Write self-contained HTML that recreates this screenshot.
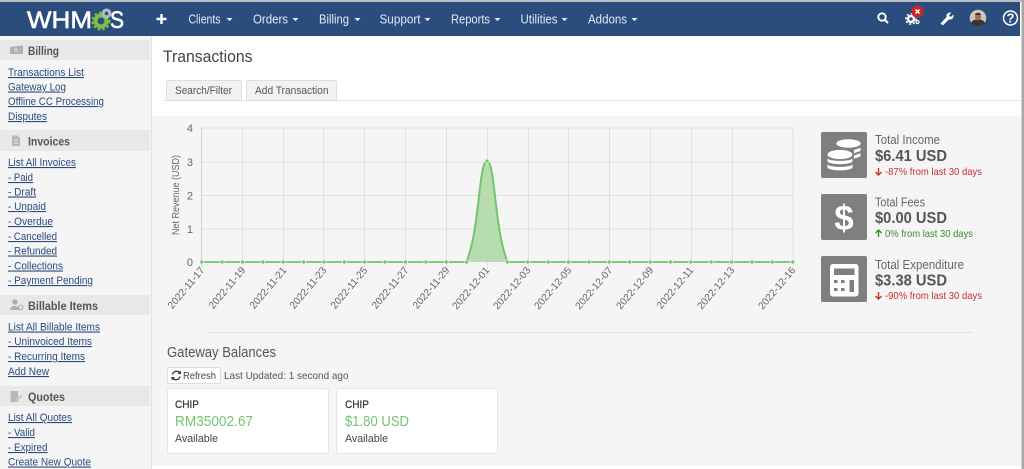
<!DOCTYPE html>
<html><head><meta charset="utf-8"><title>Transactions</title>
<style>
html,body{margin:0;padding:0;width:1024px;height:469px;overflow:hidden;background:#fff}
svg{display:block;font-family:"Liberation Sans",Arial,sans-serif;filter:blur(.35px)}
.nav{font-size:13px;fill:#e4eaf2}
.sh{font-size:12px;font-weight:bold;fill:#555}
.l{font-size:11px;fill:#2c4a80;text-decoration:underline}
.st{font-size:12.5px;fill:#666}
.sv{font-size:15.5px;font-weight:bold;fill:#555}
.r{font-size:10.5px;fill:#c9302c}
.g{font-size:10.5px;fill:#3c8d2f}
.t{font-size:11px;fill:#444}
.c{font-size:11px;fill:#333;stroke:#333;stroke-width:.25}
</style></head><body>
<svg width="1024" height="469" viewBox="0 0 1024 469" xmlns="http://www.w3.org/2000/svg">
<rect width="1024" height="469" fill="#fff"/>
<!-- sidebar -->
<rect x="0" y="36" width="151" height="433" fill="#f5f5f5"/>
<rect x="151" y="36" width="1" height="433" fill="#e2e2e2"/>
<!-- top bar -->
<rect x="0" y="0" width="1024" height="2" fill="#b9bcc0"/>
<rect x="0" y="2" width="1020" height="34" fill="#2a4d7e"/>
<rect x="1021.500" y="0" width="2.500" height="469" fill="#a8a8a8"/>
<!-- logo -->
<text x="27" y="28" font-size="24" fill="#fff" stroke="#fff" stroke-width=".6" textLength="65" lengthAdjust="spacingAndGlyphs">WHM</text>
<circle cx="101" cy="21" r="5.500" fill="none" stroke="#7cc142" stroke-width="4"/>
<circle cx="101" cy="21" r="8.500" fill="none" stroke="#7cc142" stroke-width="2" stroke-dasharray="2.500 2.200"/>
<circle cx="106.500" cy="13.500" r="5" fill="#aebcc6"/>
<circle cx="106.500" cy="13.500" r="1.800" fill="#2a4d7e"/>
<text x="110" y="28" font-size="24" fill="#fff" stroke="#fff" stroke-width=".6" textLength="14" lengthAdjust="spacingAndGlyphs">S</text>
<!-- nav -->
<path d="M161.500 14v10M156.500 19h10" stroke="#fff" stroke-width="2.400" fill="none"/>
<text class="nav" y="23.500" x="188.500" textLength="32" lengthAdjust="spacingAndGlyphs">Clients</text>
<text class="nav" y="23.500" x="253" textLength="35" lengthAdjust="spacingAndGlyphs">Orders</text>
<text class="nav" y="23.500" x="319" textLength="30" lengthAdjust="spacingAndGlyphs">Billing</text>
<text class="nav" y="23.500" x="379.500" textLength="41" lengthAdjust="spacingAndGlyphs">Support</text>
<text class="nav" y="23.500" x="451" textLength="39" lengthAdjust="spacingAndGlyphs">Reports</text>
<text class="nav" y="23.500" x="520.500" textLength="37" lengthAdjust="spacingAndGlyphs">Utilities</text>
<text class="nav" y="23.500" x="588" textLength="39" lengthAdjust="spacingAndGlyphs">Addons</text>
<g fill="#e4eaf2">
<path d="M226.500 18h6l-3 3.200z"/><path d="M292.500 18h6l-3 3.200z"/><path d="M354.500 18h6l-3 3.200z"/><path d="M424.500 18h6l-3 3.200z"/><path d="M494.500 18h6l-3 3.200z"/><path d="M561.500 18h6l-3 3.200z"/><path d="M631.500 18h6l-3 3.200z"/>
</g>
<!-- right icons -->
<circle cx="882" cy="17" r="3.700" fill="none" stroke="#fff" stroke-width="1.900"/>
<path d="M884.800 19.800l3.200 3.200" stroke="#fff" stroke-width="2.200"/>
<circle cx="911" cy="19" r="3" fill="none" stroke="#fff" stroke-width="2.600"/>
<circle cx="911" cy="19" r="5.200" fill="none" stroke="#fff" stroke-width="1.500" stroke-dasharray="2 2"/>
<circle cx="917.500" cy="22" r="1.500" fill="none" stroke="#fff" stroke-width="1.200"/>
<circle cx="917.500" cy="11.500" r="6.200" fill="#c42727"/>
<path d="M915.500 9.500l4 4M919.500 9.500l-4 4" stroke="#fff" stroke-width="1.500"/>
<path d="M941 23.500l6-6.500c-1-2.300.8-4.500 3.800-4.200l-2 2.100.6 1.700 1.800.5 2-2c.3 3-2 4.800-4.300 3.900l-6 6z" fill="#fff" stroke="#fff" stroke-width=".6"/>
<circle cx="978" cy="18" r="8.300" fill="#cfc5b8"/>
<path d="M971 23c1.500-3 3.500-3.500 7-3.500s5.500.5 7 3.500c-2 2.300-4.500 3.300-7 3.300s-5-1-7-3.300z" fill="#3a332e"/>
<ellipse cx="978" cy="16.500" rx="3" ry="4" fill="#8f7562"/>
<path d="M975 15c0-2.600 6-2.600 6 0z" fill="#3a332e"/>
<circle cx="1010.500" cy="18" r="7" fill="none" stroke="#fff" stroke-width="1.500"/>
<text x="1010.500" y="22.500" font-size="13" font-weight="bold" fill="#fff" text-anchor="middle">?</text>
<!-- sidebar sections -->
<rect x="0" y="40" width="150" height="20" fill="#e8e8e8"/>
<rect x="0" y="130" width="150" height="21" fill="#e8e8e8"/>
<rect x="0" y="295" width="150" height="20" fill="#e8e8e8"/>
<rect x="0" y="386" width="150" height="20" fill="#e8e8e8"/>
<path d="M10 47l12-1.500h1v8.500h-13z" fill="#b0b0b0"/><circle cx="16" cy="50" r="2.200" fill="#c8c8c8"/>
<path d="M12 135.500h5.500l2.500 2.500v8h-8z" fill="#b8b8b8"/><path d="M14 140h4M14 143h4" stroke="#e8e8e8"/>
<circle cx="15" cy="302" r="2.800" fill="#b0b0b0"/><path d="M10 310c0-5.500 9-5.500 9 0z" fill="#b0b0b0"/><circle cx="20.800" cy="307.500" r="2.200" fill="none" stroke="#b0b0b0" stroke-width="1.100"/>
<path d="M10.500 391h7.500v11h-7.500z" fill="#b8b8b8"/><path d="M15 400l6-5 1.300 1.300-6 5.200z" fill="#c4c4c4"/>
<text class="sh" x="28" y="55" textLength="31" lengthAdjust="spacingAndGlyphs">Billing</text>
<text class="sh" x="28" y="145.500" textLength="42" lengthAdjust="spacingAndGlyphs">Invoices</text>
<text class="sh" x="28" y="310" textLength="70" lengthAdjust="spacingAndGlyphs">Billable Items</text>
<text class="sh" x="28" y="401" textLength="37" lengthAdjust="spacingAndGlyphs">Quotes</text>
<text class="l" x="8" y="76" textLength="76" lengthAdjust="spacingAndGlyphs">Transactions List</text>
<text class="l" x="8" y="90.500" textLength="58" lengthAdjust="spacingAndGlyphs">Gateway Log</text>
<text class="l" x="8" y="105" textLength="96" lengthAdjust="spacingAndGlyphs">Offline CC Processing</text>
<text class="l" x="8" y="120" textLength="39" lengthAdjust="spacingAndGlyphs">Disputes</text>
<text class="l" x="8" y="166" textLength="68" lengthAdjust="spacingAndGlyphs">List All Invoices</text>
<text class="l" x="8" y="181" textLength="25" lengthAdjust="spacingAndGlyphs">- Paid</text>
<text class="l" x="8" y="195.500" textLength="28" lengthAdjust="spacingAndGlyphs">- Draft</text>
<text class="l" x="8" y="210" textLength="38" lengthAdjust="spacingAndGlyphs">- Unpaid</text>
<text class="l" x="8" y="225" textLength="45" lengthAdjust="spacingAndGlyphs">- Overdue</text>
<text class="l" x="8" y="240" textLength="49" lengthAdjust="spacingAndGlyphs">- Cancelled</text>
<text class="l" x="8" y="254.500" textLength="49" lengthAdjust="spacingAndGlyphs">- Refunded</text>
<text class="l" x="8" y="269.500" textLength="55" lengthAdjust="spacingAndGlyphs">- Collections</text>
<text class="l" x="8" y="284" textLength="85" lengthAdjust="spacingAndGlyphs">- Payment Pending</text>
<text class="l" x="8" y="330.500" textLength="92" lengthAdjust="spacingAndGlyphs">List All Billable Items</text>
<text class="l" x="8" y="345" textLength="84" lengthAdjust="spacingAndGlyphs">- Uninvoiced Items</text>
<text class="l" x="8" y="360" textLength="77" lengthAdjust="spacingAndGlyphs">- Recurring Items</text>
<text class="l" x="8" y="375" textLength="41" lengthAdjust="spacingAndGlyphs">Add New</text>
<text class="l" x="8" y="421" textLength="64" lengthAdjust="spacingAndGlyphs">List All Quotes</text>
<text class="l" x="8" y="436" textLength="27" lengthAdjust="spacingAndGlyphs">- Valid</text>
<text class="l" x="8" y="451" textLength="39.500" lengthAdjust="spacingAndGlyphs">- Expired</text>
<text class="l" x="8" y="465.500" textLength="83" lengthAdjust="spacingAndGlyphs">Create New Quote</text>
<!-- title + tabs -->
<text x="163" y="62" font-size="17" fill="#444" textLength="89.500" lengthAdjust="spacingAndGlyphs">Transactions</text>
<rect x="163" y="100" width="857" height="1" fill="#e4e4e4"/>
<path d="M166.500 100.500v-18a2 2 0 0 1 2-2h71a2 2 0 0 1 2 2v18z" fill="#f2f2f2" stroke="#dedede"/>
<path d="M246.500 100.500v-18a2 2 0 0 1 2-2h86a2 2 0 0 1 2 2v18z" fill="#f2f2f2" stroke="#dedede"/>
<text x="175" y="94" font-size="11" fill="#555" textLength="57" lengthAdjust="spacingAndGlyphs">Search/Filter</text>
<text x="255" y="94" font-size="11" fill="#555" textLength="73.500" lengthAdjust="spacingAndGlyphs">Add Transaction</text>
<!-- panel -->
<rect x="152" y="116" width="869" height="350" fill="#f5f5f5"/>
<!-- chart grid -->
<g stroke="#e1e1e1" stroke-width="1" fill="none">
<path d="M201.500 128H793M201.500 162H793M201.500 195.500H793M201.500 229H793"/>
<path d="M242.500 128V268M283.500 128V268M323.500 128V268M364.500 128V268M405.500 128V268M446.500 128V268M487.500 128V268M528.500 128V268M568.500 128V268M609.500 128V268M650.500 128V268M691.500 128V268M732.500 128V268M793 128V268"/>
<path d="M201.500 128V268" stroke="#d0d0d0"/>
</g>
<g font-size="11" fill="#666" text-anchor="end">
<text x="193" y="132">4</text><text x="193" y="166">3</text><text x="193" y="199.500">2</text><text x="193" y="233">1</text><text x="193" y="266">0</text>
</g>
<text transform="translate(179 235) rotate(-90)" font-size="10.500" fill="#666" textLength="80" lengthAdjust="spacingAndGlyphs">Net Revenue (USD)</text>
<!-- series -->
<path d="M466.500 262C480 228 478.800 161 487 161C495.200 161 494 228 507.500 262Z" fill="#b6dcb0"/>
<path d="M466.500 262C480 228 478.800 161 487 161C495.200 161 494 228 507.500 262" fill="none" stroke="#74c46e" stroke-width="2"/>
<path d="M201.500 262H466.500M507.500 262H793" stroke="#88c583" stroke-width="2"/>
<g fill="#6fc66a" stroke="#eef5ec" stroke-width=".8">
<circle cx="201.700" cy="262" r="2"/><circle cx="222.100" cy="262" r="2"/><circle cx="242.500" cy="262" r="2"/><circle cx="262.800" cy="262" r="2"/><circle cx="283.200" cy="262" r="2"/><circle cx="303.600" cy="262" r="2"/><circle cx="324" cy="262" r="2"/><circle cx="344.400" cy="262" r="2"/><circle cx="364.700" cy="262" r="2"/><circle cx="385.100" cy="262" r="2"/><circle cx="405.500" cy="262" r="2"/><circle cx="425.900" cy="262" r="2"/><circle cx="446.300" cy="262" r="2"/><circle cx="466.600" cy="262" r="2"/><circle cx="487" cy="161" r="2"/><circle cx="507.400" cy="262" r="2"/><circle cx="527.800" cy="262" r="2"/><circle cx="548.200" cy="262" r="2"/><circle cx="568.500" cy="262" r="2"/><circle cx="588.900" cy="262" r="2"/><circle cx="609.300" cy="262" r="2"/><circle cx="629.700" cy="262" r="2"/><circle cx="650.100" cy="262" r="2"/><circle cx="670.400" cy="262" r="2"/><circle cx="690.800" cy="262" r="2"/><circle cx="711.200" cy="262" r="2"/><circle cx="731.600" cy="262" r="2"/><circle cx="752" cy="262" r="2"/><circle cx="772.300" cy="262" r="2"/><circle cx="792.700" cy="262" r="2"/>
</g>
<!-- x labels -->
<g font-size="10.100" fill="#666" text-anchor="end">
<text transform="translate(205 270.500) rotate(-50)">2022-11-17</text>
<text transform="translate(246 270.500) rotate(-50)">2022-11-19</text>
<text transform="translate(287 270.500) rotate(-50)">2022-11-21</text>
<text transform="translate(327 270.500) rotate(-50)">2022-11-23</text>
<text transform="translate(368 270.500) rotate(-50)">2022-11-25</text>
<text transform="translate(409 270.500) rotate(-50)">2022-11-27</text>
<text transform="translate(450 270.500) rotate(-50)">2022-11-29</text>
<text transform="translate(490 270.500) rotate(-50)">2022-12-01</text>
<text transform="translate(531 270.500) rotate(-50)">2022-12-03</text>
<text transform="translate(572 270.500) rotate(-50)">2022-12-05</text>
<text transform="translate(613 270.500) rotate(-50)">2022-12-07</text>
<text transform="translate(654 270.500) rotate(-50)">2022-12-09</text>
<text transform="translate(694 270.500) rotate(-50)">2022-12-11</text>
<text transform="translate(735 270.500) rotate(-50)">2022-12-13</text>
<text transform="translate(796 270.500) rotate(-50)">2022-12-16</text>
</g>
<!-- stats -->
<rect x="821" y="132" width="46" height="46" rx="2" fill="#7f7f7f"/>
<rect x="821" y="194" width="46" height="46" rx="2" fill="#7f7f7f"/>
<rect x="821" y="256" width="46" height="46" rx="2" fill="#7f7f7f"/>
<g fill="#fff">
<ellipse cx="848.500" cy="143.500" rx="12.200" ry="4.200"/>
<path d="M854 150l6.500-2.200v3.200l-6.500 2.200zM854 155.500l6.500-2.200v3.200l-6.500 2.200z"/>
<ellipse cx="840" cy="154.500" rx="12.500" ry="4.600"/>
<path d="M827.500 158.500c2.500 3.200 22.500 3.200 25 0v3.200c-3 3.200-22 3.200-25 0zM827.500 164.500c2.500 3.200 22.500 3.200 25 0v3.200c-3 3.500-22 3.500-25 0z"/>
</g>
<text x="844" y="230" font-size="35" font-weight="bold" fill="#fff" text-anchor="middle">$</text>
<rect x="830" y="264" width="28.500" height="32.500" rx="3" fill="#fff"/>
<rect x="834" y="268.500" width="20.500" height="6.500" fill="#7f7f7f"/>
<g fill="#7f7f7f"><rect x="834" y="280" width="3.500" height="3"/><rect x="841" y="280" width="3.500" height="3"/><rect x="834" y="288" width="3.500" height="3"/><rect x="841" y="288" width="3.500" height="3"/><rect x="849.500" y="280" width="4.500" height="12"/></g>
<text class="st" x="875" y="144" textLength="65" lengthAdjust="spacingAndGlyphs">Total Income</text>
<text class="sv" x="875" y="161" textLength="72" lengthAdjust="spacingAndGlyphs">$6.41 USD</text>
<path d="M878.500 168v7M875.500 172l3 3 3-3" fill="none" stroke="#c9302c" stroke-width="1.400"/>
<text class="r" x="885" y="175" textLength="97" lengthAdjust="spacingAndGlyphs">-87% from last 30 days</text>
<text class="st" x="875" y="206.500" textLength="50" lengthAdjust="spacingAndGlyphs">Total Fees</text>
<text class="sv" x="875" y="223" textLength="72" lengthAdjust="spacingAndGlyphs">$0.00 USD</text>
<path d="M878.500 237v-7M875.500 233l3-3 3 3" fill="none" stroke="#3c8d2f" stroke-width="1.400"/>
<text class="g" x="885" y="237" textLength="88" lengthAdjust="spacingAndGlyphs">0% from last 30 days</text>
<text class="st" x="875" y="269" textLength="89" lengthAdjust="spacingAndGlyphs">Total Expenditure</text>
<text class="sv" x="875" y="285.500" textLength="72" lengthAdjust="spacingAndGlyphs">$3.38 USD</text>
<path d="M878.500 292v7M875.500 296l3 3 3-3" fill="none" stroke="#c9302c" stroke-width="1.400"/>
<text class="r" x="885" y="299" textLength="97" lengthAdjust="spacingAndGlyphs">-90% from last 30 days</text>
<rect x="209" y="332" width="764" height="1" fill="#e2e2e2"/>
<!-- gateway -->
<text x="167" y="357" font-size="14.500" fill="#555" textLength="109" lengthAdjust="spacingAndGlyphs">Gateway Balances</text>
<rect x="167.500" y="367.500" width="53" height="16" rx="2" fill="#fff" stroke="#ddd"/>
<path d="M172.500 374.500a4.200 4.200 0 0 1 7.500-1.500M180 376.500a4.200 4.200 0 0 1-7.500 1.500" fill="none" stroke="#333" stroke-width="1.300"/>
<path d="M181 370.500v3.500h-3.500zM171.500 380.500v-3.500h3.500z" fill="#333"/>
<text x="183" y="379" font-size="10.500" fill="#444" textLength="33" lengthAdjust="spacingAndGlyphs">Refresh</text>
<text x="224" y="379" font-size="10.500" fill="#555" textLength="124.500" lengthAdjust="spacingAndGlyphs">Last Updated: 1 second ago</text>
<rect x="167.500" y="388.500" width="161" height="65" rx="2" fill="#fff" stroke="#e6e6e6"/>
<rect x="336.500" y="388.500" width="161" height="65" rx="2" fill="#fff" stroke="#e6e6e6"/>
<text class="c" x="175" y="408" textLength="24" lengthAdjust="spacingAndGlyphs">CHIP</text>
<text x="175" y="426" font-size="14.500" fill="#74c46e" textLength="78" lengthAdjust="spacingAndGlyphs">RM35002.67</text>
<text class="t" x="175" y="442" textLength="43" lengthAdjust="spacingAndGlyphs">Available</text>
<text class="c" x="345" y="408" textLength="24" lengthAdjust="spacingAndGlyphs">CHIP</text>
<text x="345" y="426" font-size="14.500" fill="#74c46e" textLength="64" lengthAdjust="spacingAndGlyphs">$1.80 USD</text>
<text class="t" x="345" y="442" textLength="43" lengthAdjust="spacingAndGlyphs">Available</text>
</svg>
</body></html>
